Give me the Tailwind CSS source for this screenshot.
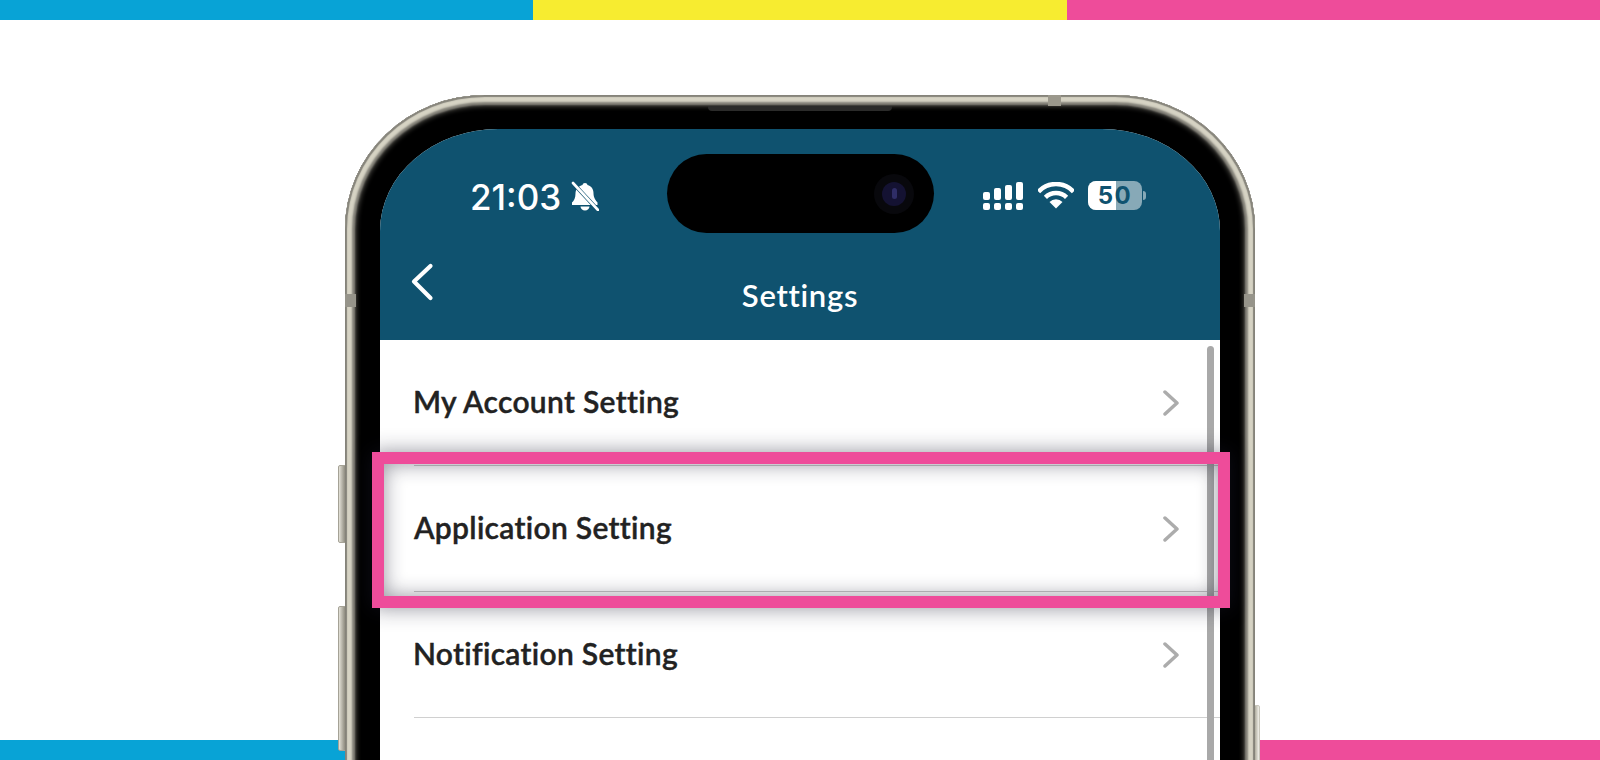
<!doctype html>
<html><head><meta charset="utf-8"><script src="https://cdn.jsdelivr.net/npm/@tailwindcss/browser@4"></script></head>
<body class="m-0 bg-white">
<div class="relative w-[1600px] h-[760px] overflow-hidden bg-white font-['Lato',sans-serif]">
  <div class="flex h-5">
    <div class="flex-1 bg-[#08a3d6]"></div><div class="flex-1 bg-[#f7ec30]"></div><div class="flex-1 bg-[#ee4c9a]"></div>
  </div>
  <div class="absolute bottom-0 left-0 right-0 h-5 flex justify-between">
    <div class="w-[350px] bg-[#08a3d6]"></div><div class="w-[342px] bg-[#ee4c9a]"></div>
  </div>

  <div class="relative ml-[345px] mt-[75px] w-[910px] h-[760px]">
    <!-- side buttons -->
    <div class="absolute left-[-7px] top-[370px] w-[8px] h-[78px] rounded-l-[2px] border border-[#a5a296] bg-gradient-to-r from-[#e4e2d8] to-[#8f8c80]"></div>
    <div class="absolute left-[-7px] top-[511px] w-[8px] h-[145px] rounded-l-[2px] border border-[#a5a296] bg-gradient-to-r from-[#e4e2d8] to-[#8f8c80]"></div>
    <div class="absolute right-[-5px] top-[610px] w-[6px] h-[150px] rounded-r-[2px] border border-[#c9c7bc] bg-gradient-to-r from-[#b0ad9f] to-[#f2f1ea]"></div>

    <div class="relative w-[910px] h-[760px] rounded-t-[140px_134px] bg-black pt-[34px] px-[35px] shadow-[inset_0_0_1px_2px_#85837a,inset_0_0_2px_7px_#d6d3c4,inset_0_0_2px_10px_#85837a,inset_0_0_4px_12px_#3a3935]">
      <!-- screen -->
      <div class="relative w-full h-[700px] rounded-t-[118px_102px] overflow-hidden bg-white">
        <header class="h-[211px] bg-[#0f526f] text-white">
          <div class="flex items-center pt-[25px] h-[104px]">
            <span class="ml-[90px] w-[92px] mt-[8px] font-['Inter',sans-serif] font-medium text-[35px] leading-none tracking-[0px]">21:03</span>
            <svg class="ml-[8px] mt-[4px]" width="29" height="30" viewBox="0 0 29 30">
              <path fill="#fff" d="M15 2c1.400 0 2.300.9 2.500 2 4 1 6 4.400 6 8.500 0 4.500 2.500 7 4 9v2.500H2V21.500c2-2 3.500-4.500 3.500-9 0-4.100 3-7.500 7-8.500.2-1.100 1.100-2 2.500-2zM10.500 25.500h9c0 2.200-2 4-4.500 4s-4.500-1.800-4.500-4z"/>
              <path stroke="#0f526f" stroke-width="4" d="M1 0l27 29"/>
              <path stroke="#fff" stroke-width="2.600" stroke-linecap="round" d="M3 2l25 27"/>
            </svg>
            <div class="ml-[68px] w-[267px] h-[79px] rounded-full bg-black flex items-center justify-end pr-[20px]">
              <div class="w-[40px] h-[40px] rounded-full bg-[#08080c] flex items-center justify-center">
                <div class="w-[24px] h-[24px] rounded-full bg-[#141232] flex items-center justify-center"><div class="w-[5px] h-[11px] rounded-full bg-[#2f2d66]"></div></div>
              </div>
            </div>
            <div class="ml-[49px] mt-[4px] flex items-end gap-[4px] h-[28px]">
              <div class="flex flex-col justify-end gap-[3px] w-[7px] h-full"><div class="h-[8px] rounded-[2px] bg-white"></div><div class="h-[7px] rounded-[2px] bg-white"></div></div>
              <div class="flex flex-col justify-end gap-[3px] w-[7px] h-full"><div class="h-[12px] rounded-[2px] bg-white"></div><div class="h-[7px] rounded-[2px] bg-white"></div></div>
              <div class="flex flex-col justify-end gap-[3px] w-[7px] h-full"><div class="h-[15px] rounded-[2px] bg-white"></div><div class="h-[7px] rounded-[2px] bg-white"></div></div>
              <div class="flex flex-col justify-end gap-[3px] w-[7px] h-full"><div class="h-[18px] rounded-[2px] bg-white"></div><div class="h-[7px] rounded-[2px] bg-white"></div></div>
            </div>
            <svg class="ml-[15px] mt-[4px]" width="36" height="27" viewBox="0 0 36 27" fill="none">
              <path stroke="#fff" stroke-width="4.500" d="M.5 9.600A24 24 0 0 1 35.500 9.600M7.400 15.400A15 15 0 0 1 28.600 15.400"/>
              <path fill="#fff" d="M18 26.500L11.500 20A9 9 0 0 1 24.500 20Z"/>
            </svg>
            <div class="ml-[14px] mt-[4px] flex items-center">
              <div class="relative w-[54px] h-[29px] rounded-[8px] bg-white/50 overflow-hidden flex items-center justify-center">
                <div class="absolute left-0 top-0 bottom-0 w-[28px] bg-white"></div>
                <span class="relative font-['Inter',sans-serif] font-bold text-[24px] leading-none text-[#0f526f] tracking-[1.500px]">50</span>
              </div>
              <div class="ml-[1px] w-[3px] h-[9px] rounded-r-full bg-white/50"></div>
            </div>
          </div>
          <div class="grid grid-cols-[1fr_auto_1fr] items-start">
            <svg class="ml-[30px] mt-[30px]" width="24" height="38" viewBox="0 0 24 38" fill="none"><path stroke="#fff" stroke-width="4.200" stroke-linecap="round" stroke-linejoin="round" d="M20.500 3L4 18.500 20.500 35"/></svg>
            <h1 class="m-0 mt-[43px] text-[31px] leading-[38px] font-semibold tracking-[0.7px]">Settings</h1>
            <div></div>
          </div>
        </header>
        <div class="text-[#222222] text-[30px] font-semibold tracking-[0.3px] [-webkit-text-stroke:0.4px_#222222]">
          <div class="ml-[34px] h-[126px] pb-[2px] flex items-center justify-between border-b border-[#c8c8c8] pr-[41px]"><span class="-ml-px">My Account Setting</span>
            <svg class="mt-[3px]" width="16" height="26" viewBox="0 0 16 26" fill="none"><path stroke="#acacac" stroke-width="3.500" stroke-linecap="round" stroke-linejoin="round" d="M2 2l12 11L2 24"/></svg></div>
          <div class="ml-[34px] h-[126px] pb-[2px] flex items-center justify-between border-b border-[#c8c8c8] pr-[41px]"><span>Application Setting</span>
            <svg class="mt-[3px]" width="16" height="26" viewBox="0 0 16 26" fill="none"><path stroke="#acacac" stroke-width="3.500" stroke-linecap="round" stroke-linejoin="round" d="M2 2l12 11L2 24"/></svg></div>
          <div class="ml-[34px] h-[126px] pb-[2px] flex items-center justify-between border-b border-[#d0d0d0] pr-[41px]"><span class="-ml-px">Notification Setting</span>
            <svg class="mt-[3px]" width="16" height="26" viewBox="0 0 16 26" fill="none"><path stroke="#acacac" stroke-width="3.500" stroke-linecap="round" stroke-linejoin="round" d="M2 2l12 11L2 24"/></svg></div>
        </div>
        <div class="absolute right-[6px] top-[217px] w-[7px] h-[500px] rounded-full bg-[#a9a9a9]"></div>
      </div>
      <!-- speaker slit -->
      <div class="absolute left-[363px] top-[11px] w-[184px] h-[5px] rounded-b-[4px] bg-[#2b2b2a]"></div>
    </div>
    <!-- antenna bands -->
    <div class="absolute left-[703px] top-0 w-[13px] h-[11px] bg-[#9b988c]"></div>
    <div class="absolute left-0 top-[199px] w-[11px] h-[13px] bg-[#96948a]"></div>
    <div class="absolute right-0 top-[199px] w-[11px] h-[13px] bg-[#96948a]"></div>
    <!-- highlight -->
    <div class="absolute left-[27px] top-[357px] w-[858px] h-[156px] border-[12px] border-[#ee4c9a] shadow-[0_0_20px_rgba(30,30,50,0.48),inset_0_0_20px_rgba(30,30,50,0.48)]"></div>
  </div>
</div>
</body></html>
